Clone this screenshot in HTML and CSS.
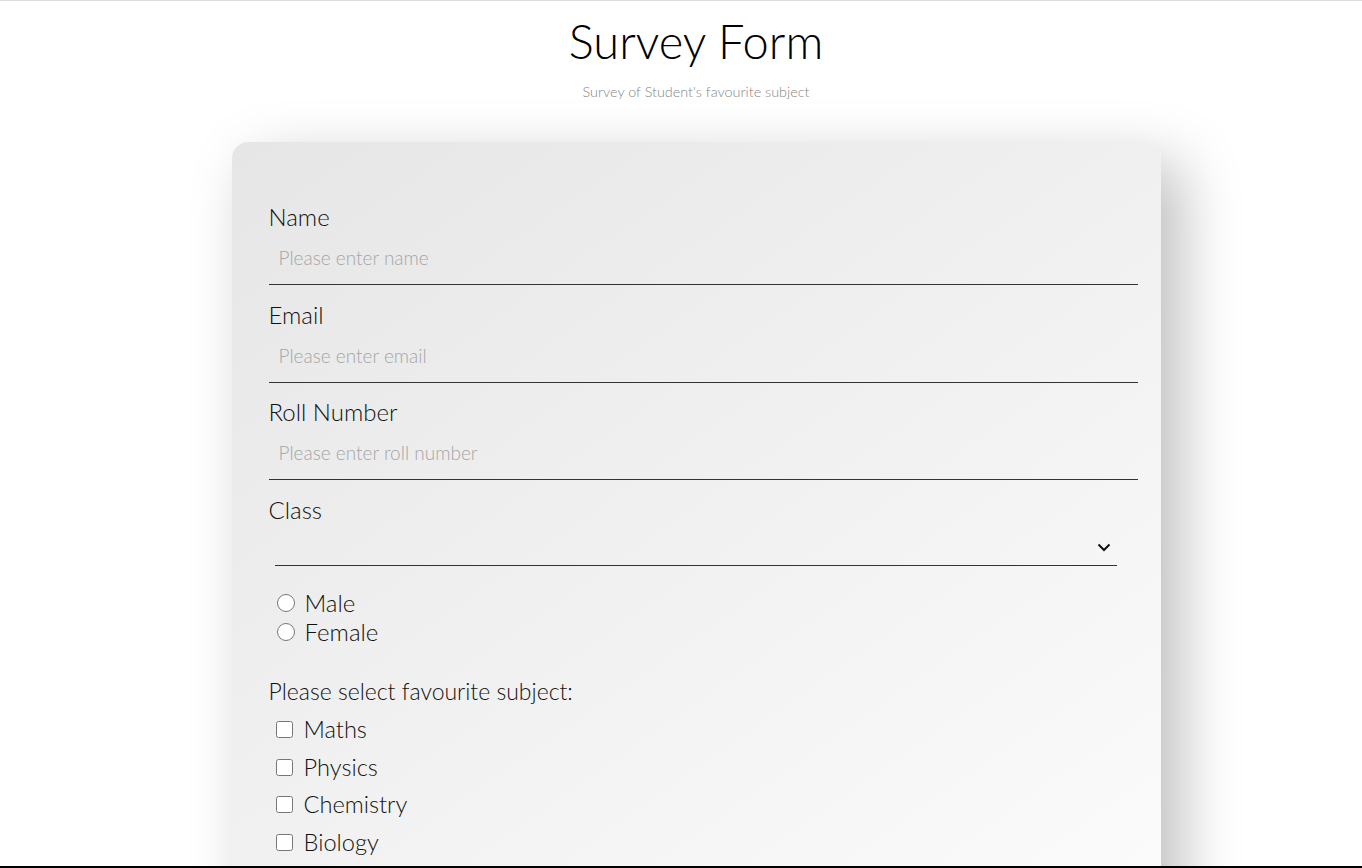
FILE: index.html
```html
<!DOCTYPE html>
<html lang="en">
<head>
<meta charset="utf-8">
<title>Survey Form</title>
<link rel="stylesheet" href="styles.css">
</head>
<body>
<header class="header">
  <h1 class="title" id="title">Survey Form</h1>
  <p class="subtitle" id="description">Survey of Student's favourite subject</p>
</header>
<main class="card">
  <form class="form" id="survey-form">
    <div class="group">
      <label class="label" for="name">Name</label>
      <input class="input" id="name" type="text" placeholder="Please enter name">
    </div>
    <div class="group">
      <label class="label" for="email">Email</label>
      <input class="input" id="email" type="email" placeholder="Please enter email">
    </div>
    <div class="group">
      <label class="label" for="number">Roll Number</label>
      <input class="input" id="number" type="number" placeholder="Please enter roll number">
    </div>
    <div class="group">
      <label class="label" for="dropdown">Class</label>
      <div class="select-wrap">
        <select class="select" id="dropdown">
          <option value=""></option>
          <option>Class 9</option>
          <option>Class 10</option>
          <option>Class 11</option>
          <option>Class 12</option>
        </select>
        <svg class="chevron" width="14" height="9" viewBox="0 0 14 9" aria-hidden="true"><path d="M1.5 1.5 L7 7 L12.5 1.5" fill="none" stroke="#111" stroke-width="2"/></svg>
      </div>
    </div>
    <div class="radios">
      <label class="option"><input class="radio" type="radio" name="gender" value="male"><span>Male</span></label>
      <label class="option"><input class="radio" type="radio" name="gender" value="female"><span>Female</span></label>
    </div>
    <p class="label question">Please select favourite subject:</p>
    <div class="checks">
      <label class="option check-row"><input class="checkbox" type="checkbox" value="maths"><span>Maths</span></label>
      <label class="option check-row"><input class="checkbox" type="checkbox" value="physics"><span>Physics</span></label>
      <label class="option check-row"><input class="checkbox" type="checkbox" value="chemistry"><span>Chemistry</span></label>
      <label class="option check-row"><input class="checkbox" type="checkbox" value="biology"><span>Biology</span></label>
    </div>
    <div class="group">
      <label class="label" for="comments">Comments</label>
      <textarea class="input textarea" id="comments" placeholder="Please enter comments"></textarea>
    </div>
    <button class="submit" type="submit" id="submit">Submit</button>
  </form>
</main>
<div class="edge-bottom" aria-hidden="true"></div>
</body>
</html>
```

FILE: styles.css
```css
* { box-sizing: border-box; }

html { background: #fff; }

body {
  margin: 0;
  padding: 0 0 80px 30px;
  border-top: 1px solid #dcdce0;
  font-family: Lato, "Open Sans", sans-serif;
  font-weight: 300;
  color: #111;
}

.header {
  text-align: center;
  padding-top: 10px;
}

.title {
  margin: 0;
  font-size: 47px;
  font-weight: 300;
  line-height: 60px;
  color: #000;
}

.subtitle {
  margin: 12px 0 0;
  font-size: 14.4px;
  line-height: 18px;
  color: #858585;
}

.card {
  width: 929px;
  margin: 41px auto 0;
  padding: 60px 23px 60px 37px;
  border-radius: 16px;
  background: linear-gradient(145deg, #e6e6e6, #ffffff);
  box-shadow: 20px 20px 60px #bebebe, -20px -20px 60px #ffffff;
}

.form { display: block; }

.group { margin-bottom: 14.5px; }

.label {
  display: block;
  margin: 0;
  font-size: 24px;
  line-height: 29px;
  font-weight: 300;
  color: #111;
}

.input {
  display: block;
  width: 100%;
  height: 50px;
  margin-top: 4px;
  padding: 0 10px 4px;
  border: none;
  border-bottom: 1px solid #333;
  background: transparent;
  font-family: Lato, sans-serif;
  font-size: 19px;
  font-weight: 300;
  color: #111;
  outline: none;
}

.input::placeholder {
  color: #a6a6a6;
  font-weight: 300;
}

.textarea {
  height: 100px;
  padding-top: 10px;
  resize: none;
}

.select-wrap {
  position: relative;
  margin: 3px 21px 0 6px;
}

.select {
  display: block;
  width: 100%;
  height: 39.5px;
  appearance: none;
  -webkit-appearance: none;
  border: none;
  border-bottom: 1px solid #333;
  background: transparent;
  font-family: Lato, sans-serif;
  font-size: 18px;
  font-weight: 300;
  outline: none;
}

.chevron {
  position: absolute;
  right: 6px;
  top: 16px;
  pointer-events: none;
}

.radios {
  margin-top: 22px;
  padding-left: 8px;
}

.option {
  display: flex;
  align-items: center;
  gap: 10px;
  font-size: 24px;
  line-height: 29px;
  color: #111;
}

.radio {
  width: 18px;
  height: 18px;
  margin: 0;
}

.question {
  margin-top: 31px;
  font-size: 23px;
}

.checks {
  padding-left: 7px;
  margin-top: 5px;
}

.check-row {
  height: 37.5px;
  gap: 11px;
  font-size: 23.6px;
}

.checkbox {
  width: 17px;
  height: 17px;
  margin: 0;
}

.submit {
  margin-top: 20px;
  padding: 10px 30px;
  font-family: Lato, sans-serif;
  font-size: 20px;
  border: none;
  border-radius: 8px;
  background: #333;
  color: #fff;
}

.edge-bottom {
  position: fixed;
  left: 0;
  right: 0;
  bottom: 0;
  height: 2px;
  background: #000;
}
```
